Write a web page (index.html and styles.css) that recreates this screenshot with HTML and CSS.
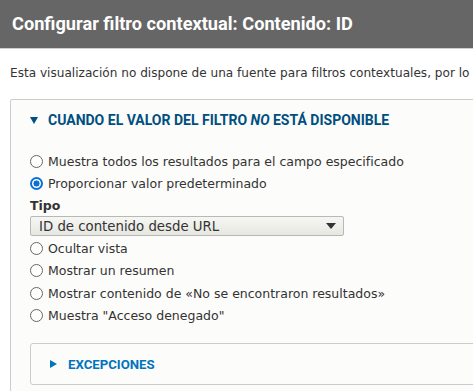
FILE: index.html
```html
<!DOCTYPE html>
<html lang="es">
<head>
<meta charset="utf-8">
<title>Configurar filtro contextual</title>
<link rel="stylesheet" href="styles.css">
</head>
<body>
<div class="dialog">
  <header class="titlebar">
    <h1 class="title">Configurar filtro contextual: Contenido: ID</h1>
  </header>
  <div class="content">
    <p class="description">Esta visualización no dispone de una fuente para filtros contextuales, por lo que no se pueden configurar opciones.</p>
    <div class="fieldset">
      <div class="summary"><span class="tri-down"></span><span>Cuando el valor del filtro <em>no</em> está disponible</span></div>
      <div class="fieldset-body">
        <label class="radio-row"><span class="radio"></span>Muestra todos los resultados para el campo especificado</label>
        <label class="radio-row"><span class="radio checked"></span>Proporcionar valor predeterminado</label>
        <div class="type-label">Tipo</div>
        <div class="select"><span>ID de contenido desde URL</span><span class="select-arrow"></span></div>
        <div class="radio-group">
          <label class="radio-row"><span class="radio"></span>Ocultar vista</label>
          <label class="radio-row"><span class="radio"></span>Mostrar un resumen</label>
          <label class="radio-row"><span class="radio"></span>Mostrar contenido de «No se encontraron resultados»</label>
          <label class="radio-row"><span class="radio"></span>Muestra "Acceso denegado"</label>
        </div>
        <div class="subfieldset">
          <div class="subsummary"><span class="tri-right"></span><span>Excepciones</span></div>
        </div>
      </div>
    </div>
  </div>
</div>
</body>
</html>
```

FILE: styles.css
```css
html, body {
  margin: 0;
  padding: 0;
  background: #fff;
  overflow: hidden;
}
body {
  font-family: "DejaVu Sans", sans-serif;
  color: #333;
  font-size: 12px;
}
.dialog {
  width: 473px;
  height: 391px;
  overflow: hidden;
}
.titlebar {
  height: 48px;
  background: #666;
  border-bottom: 1px solid #cfcfcf;
  display: flex;
  align-items: center;
  padding-left: 12px;
}
.title {
  margin: 0 0 1px;
  color: #fff;
  font-family: Roboto, "Liberation Sans", sans-serif;
  font-weight: 700;
  font-size: 18.2px;
  white-space: nowrap;
}
.content {
  padding: 0 0 0 10px;
}
.description {
  margin: 16px 0 0;
  line-height: 16px;
  white-space: nowrap;
  font-size: 12.1px;
  color: #333;
}
.fieldset {
  margin-top: 18px;
  width: 700px;
  height: 400px;
  border: 1px solid #ccc;
  border-radius: 2px;
  background: #fcfcfa;
}
.summary {
  display: flex;
  align-items: center;
  height: 40px;
  padding-left: 19px;
  color: #004f80;
  font-family: Roboto, "Liberation Sans", sans-serif;
  font-weight: 700;
  font-size: 14px;
  text-transform: uppercase;
}
.summary em { font-style: italic; }
.tri-down {
  width: 0;
  height: 0;
  border-left: 4.5px solid transparent;
  border-right: 4.5px solid transparent;
  border-top: 7px solid #004f80;
  margin-right: 10px;
}
.fieldset-body {
  padding: 10px 0 0 19px;
}
.radio-row {
  display: flex;
  align-items: center;
  height: 22.5px;
  font-size: 12.5px;
  color: #333;
  white-space: nowrap;
}
.radio {
  box-sizing: border-box;
  width: 13px;
  height: 13px;
  border: 1px solid #666;
  border-radius: 50%;
  background: #fff;
  margin-right: 5px;
  flex: none;
}
.radio.checked {
  border: 2px solid #0a6fd6;
  background: radial-gradient(circle, #0a6fd6 0 2.8px, #fff 3.3px);
}
.type-label {
  font-weight: 700;
  font-size: 12.5px;
  line-height: 21px;
  height: 21px;
}
.select {
  box-sizing: border-box;
  width: 314px;
  height: 20px;
  border: 1px solid #b8b8b8;
  border-radius: 2px;
  background: linear-gradient(#f6f6f3, #e7e7e2);
  display: flex;
  align-items: center;
  justify-content: space-between;
  padding: 0 7px 0 8px;
  font-size: 13.3px;
  color: #333;
}
.select-arrow {
  width: 0;
  height: 0;
  border-left: 5px solid transparent;
  border-right: 5px solid transparent;
  border-top: 6px solid #333;
}
.radio-group {
  margin-top: 1px;
}
.subfieldset {
  margin-top: 16px;
  width: 600px;
  height: 40px;
  border: 1px solid #ccc;
  border-radius: 3px;
  background: #fcfcfa;
}
.subsummary {
  display: flex;
  align-items: center;
  height: 40px;
  padding-left: 19px;
  color: #0074bd;
  font-family: Roboto, "Liberation Sans", sans-serif;
  font-weight: 700;
  font-size: 13.2px;
  text-transform: uppercase;
}
.tri-right {
  width: 0;
  height: 0;
  border-top: 4.5px solid transparent;
  border-bottom: 4.5px solid transparent;
  border-left: 7px solid #0074bd;
  margin-right: 11px;
}
```
